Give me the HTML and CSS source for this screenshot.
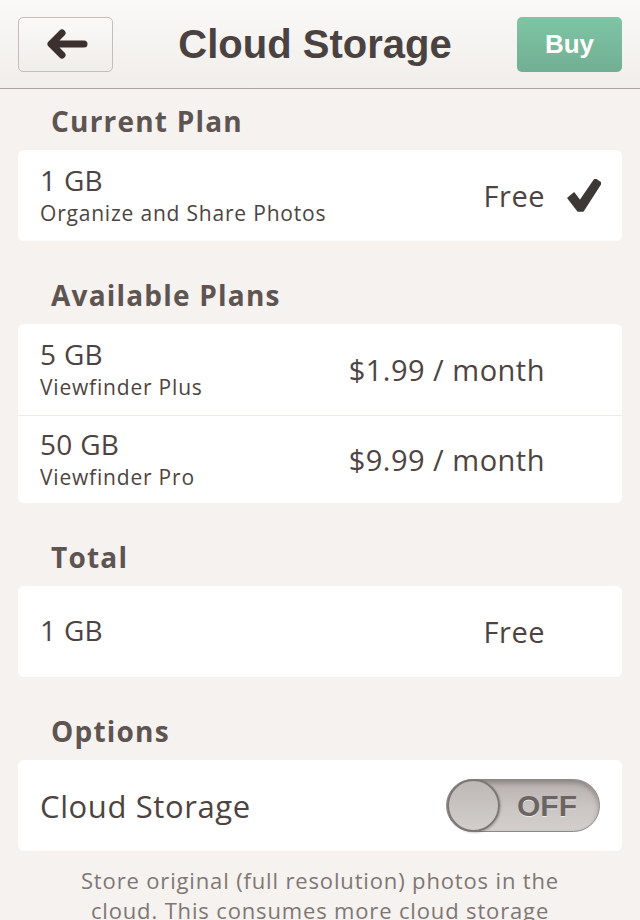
FILE: index.html
```html
<!DOCTYPE html>
<html>
<head>
<meta charset="utf-8">
<link rel="stylesheet" href="styles.css">
</head>
<body>
<header class="navbar">
  <button class="back-btn" aria-label="Back">
    <svg width="44" height="32" viewBox="0 0 44 32">
      <path d="M40 16 H10 M18 5 L7 16 L18 27" fill="none" stroke="#3b302d" stroke-width="7" stroke-linecap="round" stroke-linejoin="round"/>
    </svg>
  </button>
  <h1 class="title">Cloud Storage</h1>
  <button class="buy-btn">Buy</button>
</header>

<main class="content">
  <h2 class="section-title first">Current Plan</h2>
  <div class="card">
    <div class="row">
      <div class="plan">
        <div class="plan-size">1 GB</div>
        <div class="plan-name">Organize and Share Photos</div>
      </div>
      <div class="price">Free</div>
      <div class="trail">
        <svg width="34" height="33" viewBox="0 0 34 33">
          <path d="M1 19 L7 14 L13 22 L28 0 L34 4 L16 32 L11 32 Z" fill="#3d3837" stroke="#3d3837" stroke-width="1.5" stroke-linejoin="round"/>
        </svg>
      </div>
    </div>
  </div>

  <h2 class="section-title">Available Plans</h2>
  <div class="card">
    <div class="row">
      <div class="plan">
        <div class="plan-size">5 GB</div>
        <div class="plan-name">Viewfinder Plus</div>
      </div>
      <div class="price">$1.99 / month</div>
      <div class="trail"></div>
    </div>
    <div class="row divided">
      <div class="plan">
        <div class="plan-size">50 GB</div>
        <div class="plan-name">Viewfinder Pro</div>
      </div>
      <div class="price">$9.99 / month</div>
      <div class="trail"></div>
    </div>
  </div>

  <h2 class="section-title">Total</h2>
  <div class="card">
    <div class="row">
      <div class="plan">
        <div class="plan-size">1 GB</div>
      </div>
      <div class="price">Free</div>
      <div class="trail"></div>
    </div>
  </div>

  <h2 class="section-title">Options</h2>
  <div class="card">
    <div class="row option-row">
      <div class="option-label">Cloud Storage</div>
      <div class="toggle">
        <div class="knob"></div>
        <span class="toggle-text">OFF</span>
      </div>
    </div>
  </div>

  <p class="note">Store original (full resolution) photos in the cloud. This consumes more cloud storage space.</p>
</main>
</body>
</html>
```

FILE: styles.css
```css
* { box-sizing: border-box; }

html, body {
  margin: 0;
  padding: 0;
  background: #f5f2ef;
  height: 920px;
  overflow: hidden;
}

body {
  font-family: "Open Sans", "Lato", sans-serif;
  color: #4d4442;
}

.navbar {
  height: 89px;
  display: flex;
  align-items: center;
  justify-content: space-between;
  padding: 0 18px;
  background: linear-gradient(#faf9f7, #f1eeeb);
  border-bottom: 1px solid #aba4a1;
}

.back-btn {
  width: 95px;
  height: 55px;
  border: 1px solid #c4bdba;
  border-radius: 5px;
  background: linear-gradient(#fbfaf9, #f0edea);
  display: flex;
  align-items: center;
  justify-content: center;
  padding: 0;
}

.title {
  margin: 0;
  font-family: "Liberation Sans", Arial, sans-serif;
  font-weight: bold;
  font-size: 40px;
  color: #4a4240;
}

.buy-btn {
  width: 105px;
  height: 55px;
  border: none;
  border-radius: 5px;
  background: linear-gradient(#7ec5a5, #72ae93);
  color: #ffffff;
  font-family: "Liberation Sans", Arial, sans-serif;
  font-weight: bold;
  font-size: 26px;
  padding: 0;
}

.content {
  padding: 0 18px;
}

.section-title {
  margin: 25px 0 0;
  padding-left: 33px;
  height: 58px;
  line-height: 58px;
  font-size: 28px;
  font-weight: 700;
  letter-spacing: 1.2px;
  color: #5e5452;
}

.section-title.first {
  margin-top: 3px;
}

.card {
  background: #ffffff;
  border-radius: 6px;
}

.row {
  height: 91px;
  display: flex;
  align-items: center;
  padding-left: 22px;
}

.row.divided {
  height: 88px;
  border-top: 1px solid #efebe8;
}

.plan {
  flex: 1;
  display: flex;
  flex-direction: column;
  margin-top: -3px;
}

.plan-size {
  font-size: 28px;
  line-height: 38px;
  letter-spacing: 0.3px;
}

.plan-name {
  font-size: 21px;
  line-height: 29px;
  letter-spacing: 0.8px;
}

.price {
  font-size: 29px;
  line-height: 40px;
  letter-spacing: 0.5px;
}

.trail {
  width: 77px;
  display: flex;
  justify-content: center;
  align-items: center;
}

.option-row {
  padding-right: 22px;
  justify-content: space-between;
}

.option-label {
  font-size: 31px;
  letter-spacing: 0.6px;
}

.toggle {
  position: relative;
  width: 154px;
  height: 53px;
  border-radius: 27px;
  border: 1px solid #8e8886;
  background: linear-gradient(#b6afad, #cbc6c4 55%, #d3cfcd);
  box-shadow: inset 0 3px 5px rgba(0,0,0,0.25);
  display: flex;
  align-items: center;
  justify-content: flex-end;
  padding-right: 22px;
}

.knob {
  position: absolute;
  left: 0;
  top: -1px;
  width: 53px;
  height: 53px;
  border-radius: 50%;
  border: 2px solid #7d7674;
  background: linear-gradient(#bdb8b6, #d2cecc);
  box-shadow: 1px 1px 2px rgba(0,0,0,0.2);
}

.toggle-text {
  font-family: "Liberation Sans", Arial, sans-serif;
  font-weight: bold;
  font-size: 30px;
  color: #6b6462;
  text-shadow: 0 1px 0 rgba(255,255,255,0.6);
}

.note {
  margin: 14px auto 0;
  max-width: 490px;
  text-align: center;
  font-size: 22px;
  line-height: 30px;
  letter-spacing: 0.85px;
  color: #807775;
}
```
